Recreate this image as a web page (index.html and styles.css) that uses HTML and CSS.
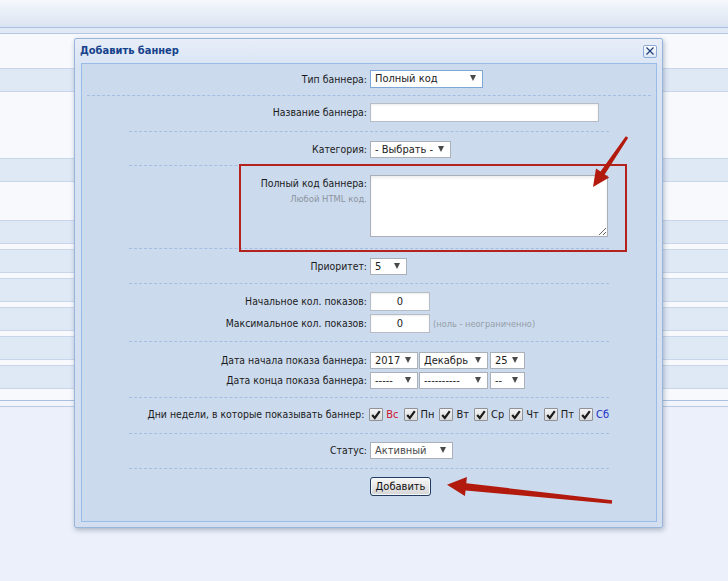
FILE: index.html
```html
<!DOCTYPE html>
<html lang="ru">
<head>
    <meta charset="UTF-8">
    <title>Добавить баннер</title>
    <link rel="stylesheet" href="styles.css">
</head>
<body>
    <!-- page behind the modal -->
    <div class="topbar"></div>
    <div class="substrip"></div>
    <div class="bg-list">
        <div class="bg-gap gap-34"></div>
        <div class="bg-band"></div>
        <div class="bg-gap gap-66"></div>
        <div class="bg-band"></div>
        <div class="bg-gap gap-38"></div>
        <div class="bg-band"></div>
        <div class="bg-gap gap-5"></div>
        <div class="bg-band"></div>
        <div class="bg-gap gap-5"></div>
        <div class="bg-band"></div>
        <div class="bg-gap gap-5"></div>
        <div class="bg-band"></div>
        <div class="bg-gap gap-5"></div>
        <div class="bg-band"></div>
        <div class="bg-gap gap-5"></div>
        <div class="bg-band"></div>
        <div class="bg-gap gap-11"></div>
    </div>
    <div class="bg-foot"></div>

    <!-- modal -->
    <div class="dialog">
        <div class="dialog-head">
            <span class="dialog-title">Добавить баннер</span>
            <span class="close">
                <svg width="8" height="8" viewBox="0 0 8 8"><path d="M0.5 0.5 L7.5 7.5 M7.5 0.5 L0.5 7.5" stroke="#1f3f78" stroke-width="1.2" fill="none"/></svg>
            </span>
        </div>
        <div class="dialog-body">
            <div class="frow first">
                <div class="lbl">Тип баннера:</div>
                <div><div class="sel sel-focus sel-type">Полный код</div></div>
            </div>

            <div class="ftable">
                <div class="sect r-name">
                    <div class="frow">
                        <div class="lbl">Название баннера:</div>
                        <div><input class="inp inp-name" type="text"></div>
                    </div>
                </div>

                <div class="sect r-cat">
                    <div class="frow">
                        <div class="lbl">Категория:</div>
                        <div><div class="sel sel-cat">- Выбрать -</div></div>
                    </div>
                </div>

                <div class="sect r-code">
                    <div class="frow top">
                        <div class="lbl lbl-top">
                            Полный код баннера:
                            <div class="hint">Любой HTML код.</div>
                        </div>
                        <div><textarea class="code"></textarea></div>
                    </div>
                </div>

                <div class="sect r-prio">
                    <div class="frow">
                        <div class="lbl">Приоритет:</div>
                        <div><div class="sel sel-prio">5</div></div>
                    </div>
                </div>

                <div class="sect r-count">
                    <div class="frow">
                        <div class="lbl">Начальное кол. показов:</div>
                        <div><input class="inp inp-num" type="text" value="0"></div>
                    </div>
                    <div class="frow">
                        <div class="lbl">Максимальное кол. показов:</div>
                        <div class="inline"><input class="inp inp-num" type="text" value="0"><span class="note">(ноль - неограниченно)</span></div>
                    </div>
                </div>

                <div class="sect r-date">
                    <div class="frow">
                        <div class="lbl">Дата начала показа баннера:</div>
                        <div class="inline">
                            <div class="sel sel-year">2017</div>
                            <div class="sel sel-month">Декабрь</div>
                            <div class="sel sel-day">25</div>
                        </div>
                    </div>
                    <div class="frow">
                        <div class="lbl">Дата конца показа баннера:</div>
                        <div class="inline">
                            <div class="sel sel-year">-----</div>
                            <div class="sel sel-month">----------</div>
                            <div class="sel sel-day">--</div>
                        </div>
                    </div>
                </div>

                <div class="sect r-days">
                    <div class="frow">
                        <div class="lbl">Дни недели, в которые показывать баннер:</div>
                        <div class="days">
                            <span class="cb"><svg width="10" height="10" viewBox="0 0 10 10"><path d="M1.2 5 L3.8 8 L8.8 1.2" stroke="#1c1c1c" stroke-width="2.2" fill="none"/></svg></span><span class="day sun">Вс</span>
                            <span class="cb"><svg width="10" height="10" viewBox="0 0 10 10"><path d="M1.2 5 L3.8 8 L8.8 1.2" stroke="#1c1c1c" stroke-width="2.2" fill="none"/></svg></span><span class="day">Пн</span>
                            <span class="cb"><svg width="10" height="10" viewBox="0 0 10 10"><path d="M1.2 5 L3.8 8 L8.8 1.2" stroke="#1c1c1c" stroke-width="2.2" fill="none"/></svg></span><span class="day">Вт</span>
                            <span class="cb"><svg width="10" height="10" viewBox="0 0 10 10"><path d="M1.2 5 L3.8 8 L8.8 1.2" stroke="#1c1c1c" stroke-width="2.2" fill="none"/></svg></span><span class="day">Ср</span>
                            <span class="cb"><svg width="10" height="10" viewBox="0 0 10 10"><path d="M1.2 5 L3.8 8 L8.8 1.2" stroke="#1c1c1c" stroke-width="2.2" fill="none"/></svg></span><span class="day">Чт</span>
                            <span class="cb"><svg width="10" height="10" viewBox="0 0 10 10"><path d="M1.2 5 L3.8 8 L8.8 1.2" stroke="#1c1c1c" stroke-width="2.2" fill="none"/></svg></span><span class="day">Пт</span>
                            <span class="cb"><svg width="10" height="10" viewBox="0 0 10 10"><path d="M1.2 5 L3.8 8 L8.8 1.2" stroke="#1c1c1c" stroke-width="2.2" fill="none"/></svg></span><span class="day sat">Сб</span>
                        </div>
                    </div>
                </div>

                <div class="sect r-status">
                    <div class="frow">
                        <div class="lbl">Статус:</div>
                        <div><div class="sel sel-status">Активный</div></div>
                    </div>
                </div>

                <div class="sect r-btn">
                    <div class="frow">
                        <div></div>
                        <div><button class="btn" type="button">Добавить</button></div>
                    </div>
                </div>
            </div>
        </div>
    </div>

    <!-- red annotations drawn over the screenshot -->
    <svg class="annot" width="728" height="581" viewBox="0 0 728 581">
        <rect x="240" y="165" width="386" height="86" fill="none" stroke="#b3221c" stroke-width="2"/>
        <polygon fill="#b31a0e" points="625.8,136.2 600.5,171.6 596,168.5 593,187 609.2,177.5 604.7,174.4 628.2,137.8"/>
        <polygon fill="#b31a0e" points="612.2,500.2 466.3,483.3 466.9,477 447,484.8 464.9,496 465.6,490.4 611.8,503.8"/>
    </svg>
</body>
</html>
```

FILE: styles.css
```css
* {
    box-sizing: border-box;
}

body {
    margin: 0;
    background-color: #ebf0fa;
    font-family: "DejaVu Sans Condensed", "DejaVu Sans", sans-serif;
    font-size: 11px;
    color: #1b1b1b;
}

/* Page behind the dialog */
.topbar {
    height: 28px;
    background: linear-gradient(#f5f8fc, #dae4f1);
    border-bottom: 1px solid #a9c0df;
}
.substrip {
    height: 6px;
    background-color: #e1e9f6;
    border-bottom: 1px solid #b5c8e2;
}
.bg-gap {
    background-color: #f7f9fd;
}
.gap-34 { height: 34px; }
.gap-66 { height: 66px; }
.gap-38 { height: 38px; }
.gap-11 { height: 11px; }
.gap-5 { height: 5px; }
.bg-band {
    height: 24px;
    background-color: #dfe8f5;
    border-top: 1px solid #c8d6ea;
    border-bottom: 1px solid #c8d6ea;
}
.bg-foot {
    height: 7px;
    background-color: #f2f5fb;
    border-top: 1px solid #a9c0df;
    border-bottom: 1px solid #b9cbe4;
}

/* Dialog window */
.dialog {
    position: absolute;
    left: 74px;
    top: 38px;
    width: 589px;
    height: 490px;
    padding: 0 5px 5px 6px;
    border: 1px solid #99b5db;
    border-radius: 2px;
    background: linear-gradient(#e7eef8, #d8e3f3 30px, #d3dff0);
    box-shadow: 1px 2px 5px rgba(50, 70, 100, 0.35);
}
.dialog-head {
    height: 24px;
    display: flex;
    align-items: center;
    justify-content: space-between;
}
.dialog-title {
    margin-left: -1px;
    margin-top: -2px;
    font-weight: bold;
    color: #15428b;
}
.close {
    width: 14px;
    height: 13px;
    display: flex;
    align-items: center;
    justify-content: center;
    border: 1px solid #8eaad6;
    border-radius: 2px;
    background: linear-gradient(#fbfcfe, #dce6f4);
}

.dialog-body {
    height: 459px;
    padding: 0 2px;
    border: 1px solid #99bbe8;
    background-color: #cbdaed;
}

/* Form rows */
.frow {
    display: grid;
    grid-template-columns: 1fr 1fr;
    column-gap: 2px;
    align-items: center;
    line-height: 15px;
}
.frow.top {
    align-items: start;
}
.lbl {
    text-align: right;
    padding-right: 1px;
    font-size: 10.4px;
}
.lbl-top {
    padding-top: 1px;
}
.hint {
    margin-top: 0;
    font-size: 9.4px;
    color: #8c959f;
}
.first {
    margin: 0 3px;
    padding: 6px 0 7px;
    border-bottom: 1px dashed #a3bde3;
}
.ftable {
    width: 480px;
    margin: 0 auto;
}
.sect {
    padding: 8px 0 9px;
    border-bottom: 1px dashed #a3bde3;
}
.sect .frow + .frow {
    margin-top: 3px;
}
.r-name { padding: 7px 0 9px; }
.r-cat { padding: 9px 0 7px; }
.r-code { padding: 9px 0 11px; }
.r-prio { padding: 9px 0 8px; }
.r-count { padding: 8px 0 8px; }
.r-date { padding: 10px 0 8px; }
.r-days { padding: 9px 0 11px; }
.r-status { padding: 8px 0 9px; }
.r-btn { border-bottom: none; }

.inline {
    display: flex;
    align-items: center;
}

/* Fake select boxes */
.sel {
    position: relative;
    height: 17px;
    padding-left: 4px;
    border: 1px solid #a9b0b8;
    background-color: #fff;
    line-height: 15px;
    color: #222;
    white-space: nowrap;
}
.sel::after {
    content: "";
    position: absolute;
    right: 6px;
    top: 4px;
    border-left: 3.5px solid transparent;
    border-right: 3.5px solid transparent;
    border-top: 6px solid #4a4a4a;
}
.sel-focus {
    height: 18px;
    border-color: #7ea7d8;
    line-height: 16px;
}
.sel-type { width: 113px; }
.sel-cat { width: 81px; }
.sel-prio { width: 37px; }
.sel-year { width: 48px; }
.sel-month { width: 69px; margin-left: 1px; }
.sel-day { width: 35px; margin-left: 2px; }
.sel-status { width: 83px; color: #4a4a4a; }

/* Inputs */
.inp {
    display: block;
    height: 19px;
    padding: 0 3px;
    border: 1px solid #b6bdc5;
    background-color: #fff;
    box-shadow: inset 0 1px 2px rgba(0, 0, 0, 0.08);
    font: inherit;
    color: #222;
    outline: none;
}
.inp-name { width: 229px; }
.inp-num {
    width: 60px;
    text-align: center;
}
.note {
    margin-left: 3px;
    font-size: 9.2px;
    color: #959ea8;
}
.code {
    display: block;
    width: 238px;
    height: 62px;
    margin: 0;
    border: 1px solid #a9b0b8;
    background-color: #fff;
    box-shadow: inset 0 2px 3px rgba(0, 0, 0, 0.07);
    font: inherit;
    outline: none;
}

/* Weekday checkboxes */
.days {
    display: flex;
    align-items: center;
    height: 14px;
    padding-left: 2px;
}
.cb {
    width: 14px;
    height: 13px;
    display: flex;
    align-items: center;
    justify-content: center;
    border: 1px solid #8f9398;
    border-radius: 1px;
    background: linear-gradient(#f4f4f4, #dadada);
}
.day {
    margin: 0 5px 0 3px;
}
.day.sun { color: #d0122c; }
.day.sat { color: #1a2fc8; margin-right: 0; }

/* Submit button */
.btn {
    display: block;
    width: 61px;
    height: 19px;
    padding: 0;
    border: 1px solid #213c60;
    border-radius: 3px;
    background: linear-gradient(#f7f7f7, #e6e6e6 50%, #d5d5d5);
    box-shadow: inset 0 0 0 1px #f4f8fc;
    font: inherit;
    color: #111;
}

/* Annotation overlay */
.annot {
    position: absolute;
    left: 0;
    top: 0;
    pointer-events: none;
}
```
